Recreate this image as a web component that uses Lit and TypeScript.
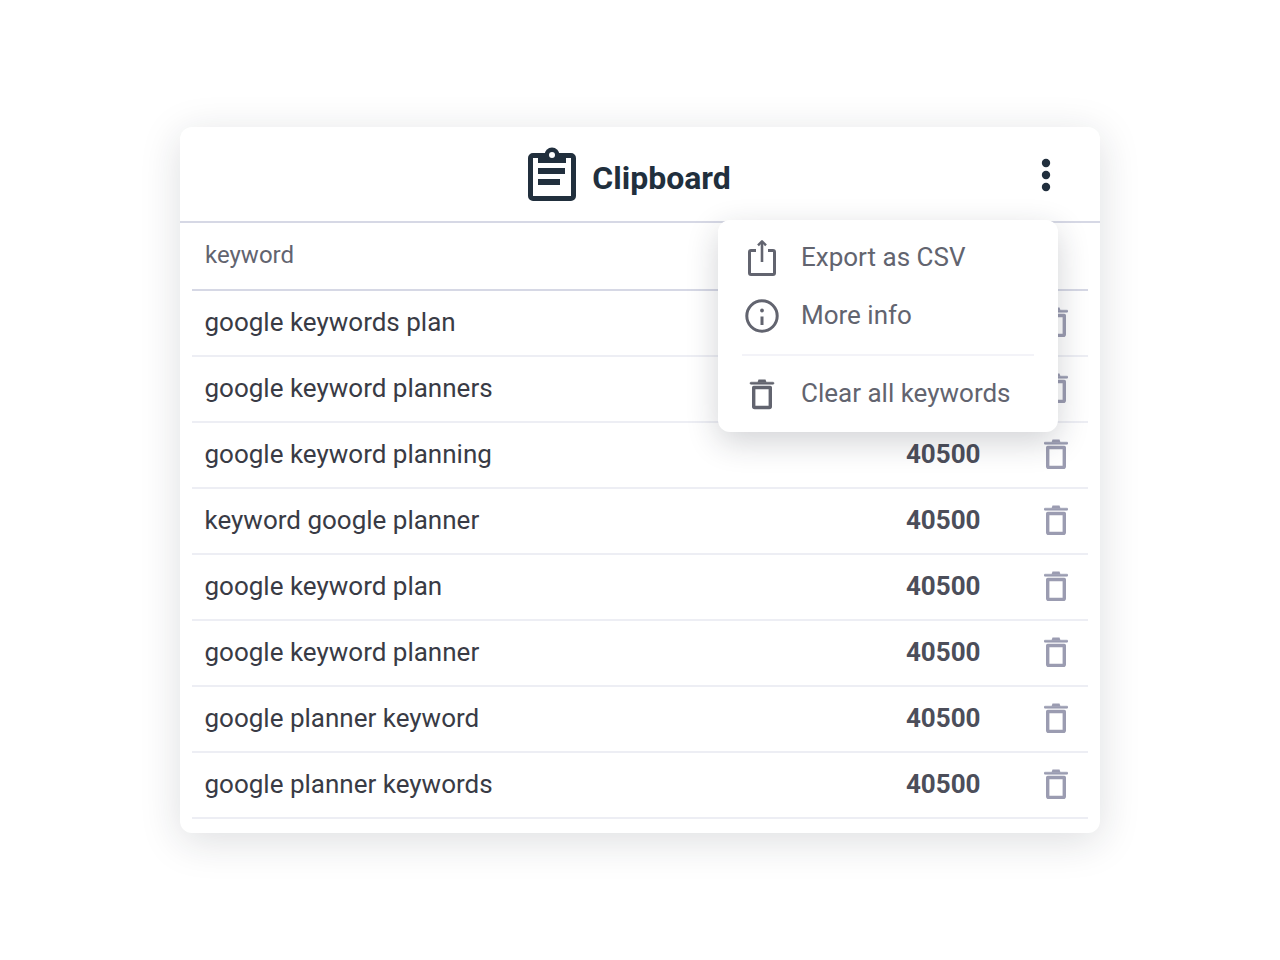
import { LitElement, html, css, svg } from "lit";
import { customElement } from "lit/decorators.js";

const trash = svg`<path d="M1 3.200h22a.9.9 0 0 1 0 2H1a.9.9 0 0 1 0-2z" fill="currentColor" stroke="currentColor" stroke-width=".6"/><path d="M7.500 3.500 8.500 .6h7l1 2.900z" fill="currentColor"/><path d="M3.700 8.500h16.600V27.500a1 1 0 0 1-1 1H4.700a1 1 0 0 1-1-1z" fill="none" stroke="currentColor" stroke-width="3.400" stroke-linejoin="round"/>`;

const keywords = [
  "google keywords plan",
  "google keyword planners",
  "google keyword planning",
  "keyword google planner",
  "google keyword plan",
  "google keyword planner",
  "google planner keyword",
  "google planner keywords",
];

@customElement("app-root")
export class AppRoot extends LitElement {
  static styles = css`
    :host {
      display: block;
      width: 1280px;
      height: 960px;
      background: #fff;
      font-family: Roboto, "Liberation Sans", sans-serif;
      padding-top: 127px;
      box-sizing: border-box;
    }
    .card {
      position: relative;
      width: 920px;
      height: 706px;
      margin-left: 180px;
      background: #fff;
      border-radius: 12px;
      box-shadow: 0 8px 40px rgba(30, 35, 50, 0.15);
      box-sizing: border-box;
    }
    .head {
      height: 96px;
      border-bottom: 2px solid #d6d8e5;
      box-sizing: border-box;
      display: flex;
      align-items: center;
      justify-content: center;
      gap: 16px;
      color: #212f3d;
      position: relative;
      padding-right: 21px;
    }
    .title {
      font-size: 32px;
      font-weight: 700;
      line-height: 40px;
      margin-top: 8px;
    }
    .logo {
      width: 48px;
      height: 54px;
      display: block;
    }
    .dots {
      position: absolute;
      left: 861px;
      top: 31px;
      width: 10px;
      height: 34px;
      display: block;
    }
    .table {
      padding: 0 12px;
    }
    .colhead {
      height: 68px;
      box-sizing: border-box;
      border-bottom: 2px solid #d6d8e5;
      padding: 0 13px 2px;
      display: flex;
      align-items: center;
      font-size: 24px;
      color: #62646f;
    }
    .row {
      height: 66px;
      box-sizing: border-box;
      border-bottom: 2px solid #edeef4;
      display: flex;
      align-items: center;
      padding: 0 20px 2px 12.5px;
      color: #393b45;
      font-size: 26px;
    }
    .kw {
      flex: 1;
    }
    .vol {
      width: 75px;
      font-weight: 700;
      color: #4c4e5a;
      margin-right: 63.5px;
      text-align: right;
    }
    .del {
      width: 24px;
      height: 30px;
      color: #9b9cb1;
      display: block;
    }
    .menu {
      position: absolute;
      left: 538px;
      top: 93px;
      width: 340px;
      height: 212px;
      background: #fff;
      border-radius: 12px;
      box-shadow: 0 10px 32px rgba(30, 35, 50, 0.2);
      box-sizing: border-box;
      padding: 8px 24px 0;
      color: #62646f;
      font-size: 26px;
      z-index: 2;
    }
    .item {
      height: 58px;
      display: flex;
      align-items: center;
      gap: 20px;
    }
    .item svg {
      width: 38px;
      height: 38px;
      display: block;
      flex: none;
      margin: 2px 0 0 1px;
    }
    .sep {
      height: 2px;
      background: #f3f3f8;
      margin: 10px 0 8px;
    }
  `;

  render() {
    return html`
      <div class="card">
        <div class="head">
          <svg class="logo" viewBox="0 0 48 54">
            <path d="M5 8.500h38a2.500 2.500 0 0 1 2.500 2.500V49a2.500 2.500 0 0 1-2.500 2.500H5A2.500 2.500 0 0 1 2.500 49V11A2.500 2.500 0 0 1 5 8.500z" fill="none" stroke="#212f3d" stroke-width="5"/>
            <path d="M10 6h28v10H10z" fill="#212f3d"/>
            <circle cx="24" cy="8" r="7.500" fill="#212f3d"/>
            <circle cx="24" cy="8" r="3" fill="#fff"/>
            <path d="M10 21h27v6H10zM10 32h22v6H10z" fill="#212f3d"/>
          </svg>
          <span class="title">Clipboard</span>
          <svg class="dots" viewBox="0 0 10 34">
            <circle cx="5" cy="5" r="4.200" fill="#212f3d"/>
            <circle cx="5" cy="17" r="4.200" fill="#212f3d"/>
            <circle cx="5" cy="29" r="4.200" fill="#212f3d"/>
          </svg>
        </div>
        <div class="table">
          <div class="colhead">keyword</div>
          ${keywords.map(
            (k) => html`
              <div class="row">
                <span class="kw">${k}</span>
                <span class="vol">40500</span>
                <svg class="del" viewBox="0 0 24 30">${trash}</svg>
              </div>
            `
          )}
        </div>
        <div class="menu">
          <div class="item">
            <svg viewBox="0 0 38 38" fill="none" stroke="currentColor" stroke-width="3" stroke-linejoin="round">
              <path d="M13 11.500H8a1.500 1.500 0 0 0-1.500 1.500v21A1.500 1.500 0 0 0 8 35.500h22a1.500 1.500 0 0 0 1.500-1.500V13A1.500 1.500 0 0 0 30 11.500h-5"/>
              <path d="M19 23V3" stroke-width="2.600"/>
              <path d="M15 6.300 19 2.300l4 4" stroke-width="2.400"/>
            </svg>
            <span>Export as CSV</span>
          </div>
          <div class="item">
            <svg viewBox="0 0 38 38" fill="none" stroke="currentColor" stroke-width="3">
              <circle cx="19" cy="19" r="15.200"/>
              <path d="M19 19.500v8.500"/>
              <circle cx="19" cy="13.500" r="1.200" fill="currentColor" stroke-width="1.400"/>
            </svg>
            <span>More info</span>
          </div>
          <div class="sep"></div>
          <div class="item">
            <svg viewBox="-7 -4 38 38">${trash}</svg>
            <span>Clear all keywords</span>
          </div>
        </div>
      </div>
    `;
  }
}
